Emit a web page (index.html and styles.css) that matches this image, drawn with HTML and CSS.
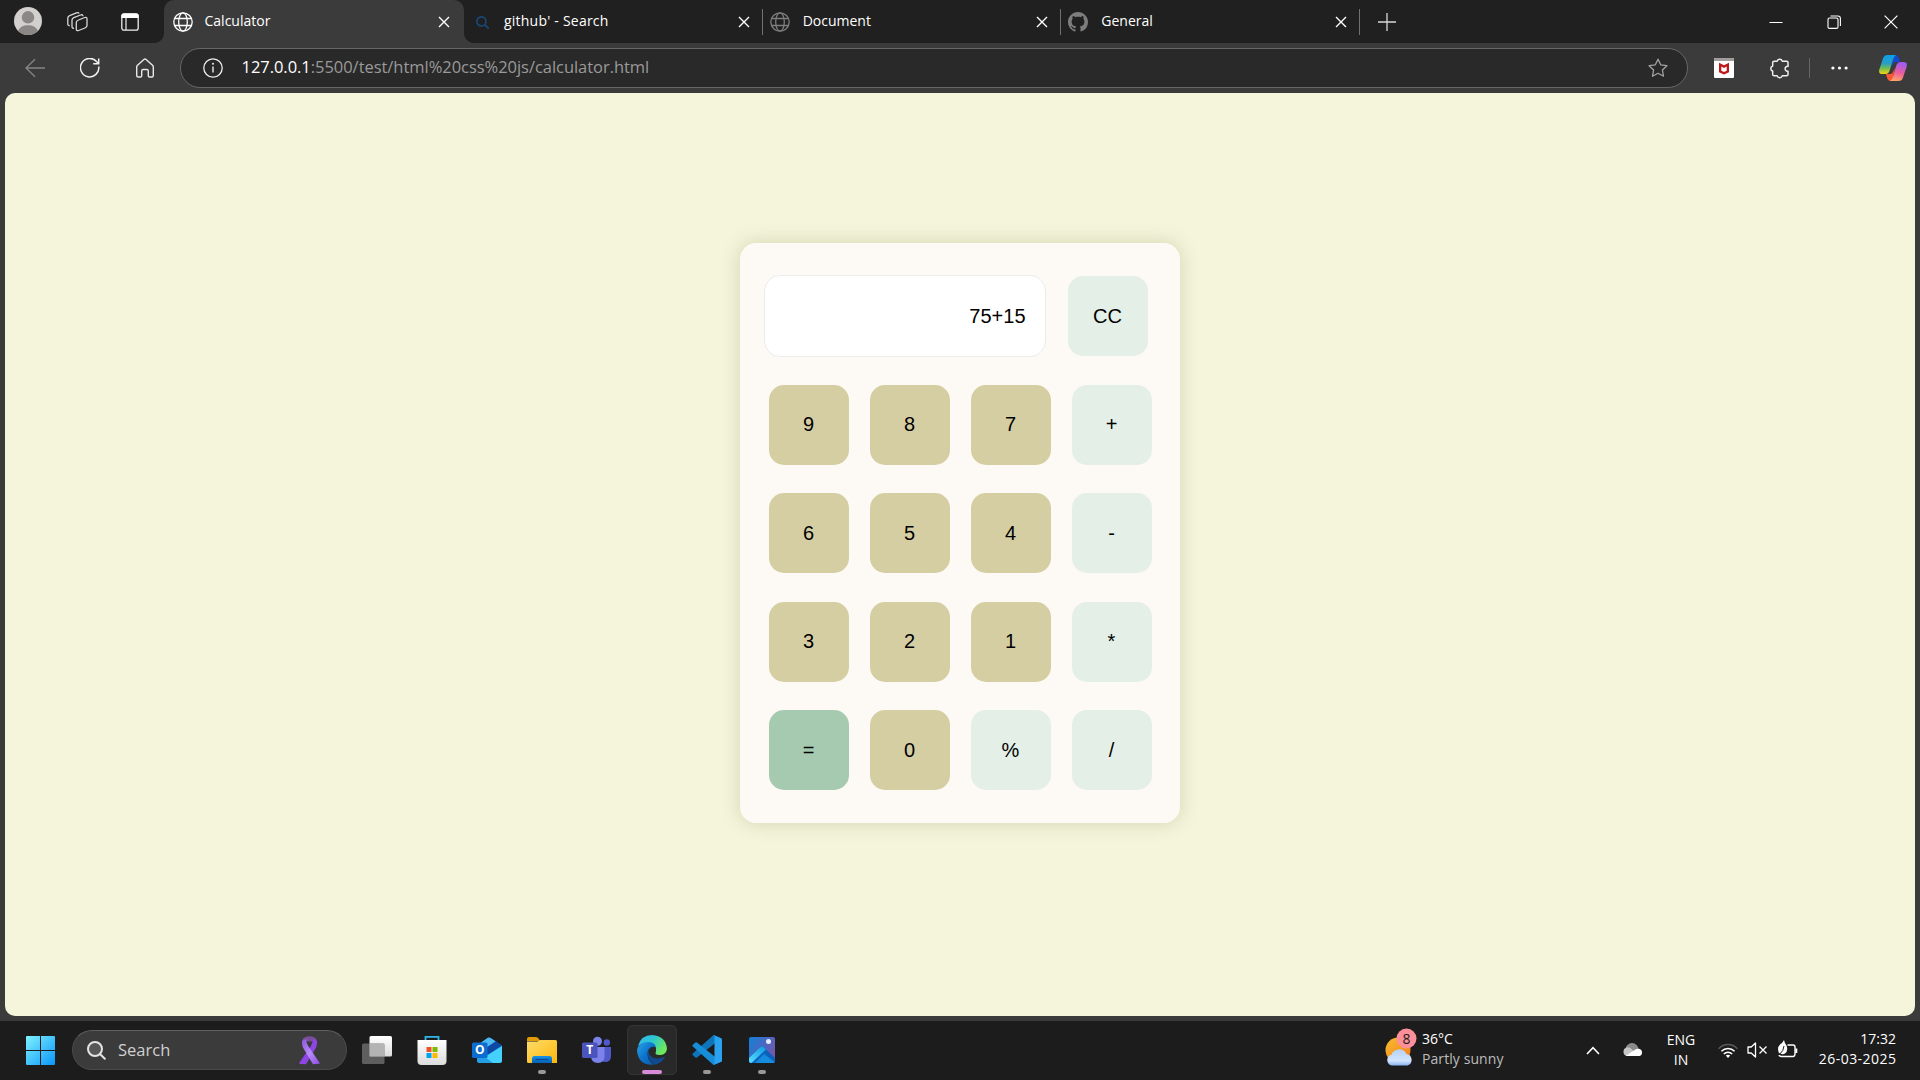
FILE: index.html
```html
<!DOCTYPE html>
<html lang="en">
<head>
<meta charset="utf-8">
<title>Calculator</title>
<link rel="stylesheet" href="styles.css">
</head>
<body>
<svg class="defs" width="0" height="0" aria-hidden="true">
  <defs>
    <symbol id="globe" viewBox="0 0 20 20"><g fill="none" stroke="currentColor" stroke-width="1.3"><circle cx="10" cy="10" r="9.2"/><ellipse cx="10" cy="10" rx="4.3" ry="9.2"/><path d="M1.6 6.5h16.8M1.6 13.5h16.8"/></g></symbol>
    <symbol id="cross" viewBox="0 0 12 12"><path d="M1 1l10 10M11 1L1 11" fill="none" stroke="currentColor" stroke-width="1.4"/></symbol>
    <linearGradient id="gWin" gradientUnits="userSpaceOnUse" x1="0" y1="0" x2="29" y2="29"><stop offset="0" stop-color="#7ff3ff"/><stop offset="1" stop-color="#0a94fb"/></linearGradient>
    <linearGradient id="gStore" x1="0" y1="0" x2="0" y2="1"><stop offset="0" stop-color="#fff"/><stop offset="1" stop-color="#dcdcdc"/></linearGradient>
    <linearGradient id="gFolder" x1="0" y1="0" x2="1" y2="1"><stop offset="0" stop-color="#ffdb6b"/><stop offset="1" stop-color="#fcb90a"/></linearGradient>
    <linearGradient id="gBlue" x1="0" y1="0" x2="0" y2="1"><stop offset="0" stop-color="#1593e8"/><stop offset="1" stop-color="#0560b5"/></linearGradient>
    <linearGradient id="gEdgeTop" x1="0" y1="0" x2="1" y2=".5"><stop offset="0" stop-color="#35b6f0"/><stop offset=".5" stop-color="#2cc6d0"/><stop offset="1" stop-color="#6ee85c"/></linearGradient>
    <linearGradient id="gEdgeLow" x1="0" y1="0" x2="1" y2="1"><stop offset="0" stop-color="#2ba4e4"/><stop offset=".5" stop-color="#0c73cf"/><stop offset="1" stop-color="#0c59a4"/></linearGradient>
    <linearGradient id="gPhoto" x1="0" y1="0" x2="1" y2=".6"><stop offset="0" stop-color="#1180d8"/><stop offset="1" stop-color="#7656ad"/></linearGradient>
    <linearGradient id="gHill" x1="0" y1="1" x2="1" y2="0"><stop offset="0" stop-color="#55e0ff"/><stop offset="1" stop-color="#1697e3"/></linearGradient>
    <linearGradient id="gCopA" x1="0" y1="0" x2="0" y2="1"><stop offset="0" stop-color="#0c9eea"/><stop offset=".45" stop-color="#2a9fc4"/><stop offset=".7" stop-color="#70bd51"/><stop offset="1" stop-color="#f6d413"/></linearGradient>
    <linearGradient id="gCopB" x1=".3" y1="0" x2=".1" y2="1"><stop offset="0" stop-color="#a05bf0"/><stop offset=".5" stop-color="#ee5d9b"/><stop offset="1" stop-color="#ffad63"/></linearGradient>
    <linearGradient id="gSun" x1="0" y1="0" x2="1" y2="1"><stop offset="0" stop-color="#f8bd32"/><stop offset="1" stop-color="#f57b16"/></linearGradient>
    <linearGradient id="gCloud" x1="0" y1="0" x2="0" y2="1"><stop offset="0" stop-color="#b6d3fb"/><stop offset=".7" stop-color="#d2e4fc"/><stop offset="1" stop-color="#86b3f3"/></linearGradient>
    <linearGradient id="gRibbon" x1="0" y1="0" x2="1" y2="1"><stop offset="0" stop-color="#9155dd"/><stop offset=".5" stop-color="#b68cf9"/><stop offset="1" stop-color="#8c4be0"/></linearGradient>
  </defs>
</svg>

<header class="tabstrip">
  <svg class="avatar" viewBox="0 0 28 28"><circle cx="14" cy="14" r="14" fill="#d2d0ce"/><circle cx="14" cy="10.3" r="6.2" fill="#8a8784"/><path d="M4.2 24C5.500 20 9 18.200 14 18.200s8.500 1.800 9.800 5.800A14 14 0 0 1 4.200 24z" fill="#8a8784"/></svg>
  <svg class="workspaces" viewBox="0 0 21 21" fill="none" stroke="#d8d8d8" stroke-width="1.3" stroke-linejoin="round"><path d="M11.500 9q-2.200.8-2.200 2.500v6.500q0 2.200 2.200 1.500l6.500-2.500q2-.8 2-2.500V8q0-2.200-2.200-1.500z"/><path d="M7 17.200q-2 .4-2-1.600V9q0-1.500 1.800-2.300L13.500 4q2.300-.8 2.500 1.200"/><path d="M2.800 14.500q-2 .3-2-1.600V7q0-1.600 1.800-2.300L9.500 1.800q2-.8 2.500.8"/></svg>
  <svg class="vertical-tabs" viewBox="0 0 18 18"><rect x=".8" y=".8" width="16.400" height="16.400" rx="2.200" fill="none" stroke="#eee" stroke-width="1.3"/><path d="M.5 5V2.500q0-2 2-2h13q2 0 2 2V5z" fill="#fff"/><path d="M5 5v12" stroke="#eee" stroke-width="1.200"/></svg>

  <div class="tab tab-active">
    <svg class="favicon"><use href="#globe"/></svg>
    <span class="tab-title">Calculator</span>
    <svg class="tab-close"><use href="#cross"/></svg>
  </div>
  <div class="tab tab-search">
    <svg class="favicon" viewBox="0 0 12 12" fill="none" stroke="#174a78" stroke-width="1.500"><circle cx="5" cy="5" r="4.200"/><path d="M8 8l4 4"/></svg>
    <span class="tab-title">github' - Search</span>
    <svg class="tab-close"><use href="#cross"/></svg>
  </div>
  <div class="tab tab-idle">
    <svg class="favicon"><use href="#globe"/></svg>
    <span class="tab-title">Document</span>
    <svg class="tab-close"><use href="#cross"/></svg>
  </div>
  <div class="tab tab-idle">
    <svg class="favicon" viewBox="0 0 16 16"><path fill="#7d7d7d" d="M8 0C3.580 0 0 3.580 0 8c0 3.540 2.290 6.530 5.470 7.590.4.070.55-.17.55-.38 0-.19-.01-.82-.01-1.490-2.010.37-2.530-.49-2.690-.94-.09-.23-.48-.94-.82-1.130-.28-.15-.68-.52-.01-.53.63-.01 1.080.58 1.230.82.72 1.210 1.870.87 2.330.66.070-.52.28-.87.51-1.070-1.780-.2-3.640-.89-3.640-3.950 0-.87.31-1.590.82-2.150-.08-.2-.36-1.020.08-2.120 0 0 .67-.21 2.200.82.64-.18 1.320-.27 2-.27s1.360.09 2 .27c1.530-1.040 2.200-.82 2.200-.82.44 1.100.16 1.920.08 2.120.51.56.82 1.270.82 2.150 0 3.070-1.870 3.750-3.650 3.950.29.25.54.73.54 1.480 0 1.070-.01 1.930-.01 2.200 0 .21.15.46.55.38A8.010 8.010 0 0 0 16 8c0-4.420-3.580-8-8-8z"/></svg>
    <span class="tab-title">General</span>
    <svg class="tab-close"><use href="#cross"/></svg>
  </div>
  <svg class="new-tab" viewBox="0 0 18 18"><path d="M9 0v18M0 9h18" stroke="#d8d8d8" stroke-width="1.300"/></svg>
  <div class="window-controls">
    <svg viewBox="0 0 14 14"><path d="M.5 7.500h13" stroke="#fff"/></svg>
    <svg viewBox="0 0 14 14" fill="none" stroke="#fff" stroke-width="1.100"><rect x="1" y="3" width="10" height="10.400" rx="1.500"/><path d="M3.500 1H11q2.400 0 2.400 2.400V11"/></svg>
    <svg viewBox="0 0 14 14"><path d="M.6.600l12.800 12.800M13.400.600L.6 13.400" stroke="#fff" stroke-width="1.200"/></svg>
  </div>
</header>

<nav class="toolbar">
  <svg class="nav-icon back" viewBox="0 0 20 20" fill="none" stroke="#858585" stroke-width="1.300"><path d="M20 10H1M10 1.200L1 10l9 8.800"/></svg>
  <svg class="nav-icon" viewBox="0 0 20 20" fill="none" stroke="#f2f2f2" stroke-width="1.500"><path d="M18.800 8.500A9.200 9.200 0 1 1 16.500 3.500L18.500 5.600M18.700.400v5.300h-5.500"/></svg>
  <svg class="nav-icon" viewBox="0 0 20 20" fill="none" stroke="#e8e8e8" stroke-width="1.400" stroke-linejoin="round"><path d="M1.700 9q0-1 .8-1.800L8.900 1.500q1.100-1 2.200 0l6.400 5.700q.8.800.8 1.800v8.500q0 1.500-1.500 1.500h-2.300q-1.200 0-1.200-1.200V13q0-1.500-1.500-1.500H8.200q-1.500 0-1.500 1.500v4.800Q6.700 19 5.500 19H3.200q-1.500 0-1.500-1.500z"/></svg>
  <div class="address">
    <svg class="info" viewBox="0 0 20 20"><circle cx="10" cy="10" r="9.200" fill="none" stroke="#eee" stroke-width="1.300"/><path d="M10 8.500v6" stroke="#eee" stroke-width="1.400"/><circle cx="10" cy="5.800" r="1" fill="#eee"/></svg>
    <span class="url"><b>127.0.0.1</b>:5500/test/html%20css%20js/calculator.html</span>
    <svg class="star" viewBox="0 0 20 20"><path d="M10 1.200l2.700 5.600 6.200.9-4.500 4.300 1.100 6.200-5.500-2.900-5.500 2.900L5.600 12 1.100 7.700l6.200-.9z" fill="none" stroke="#a2a2a2" stroke-width="1.300" stroke-linejoin="round"/></svg>
  </div>
  <svg class="mcafee" viewBox="0 0 20 20"><rect width="20" height="20" rx="1" fill="#fff"/><path d="M0 3V1q0-1 1-1h18q1 0 1 1v2z" fill="#a29d9b"/><path d="M5 4.800l5 2.500 5-2.500v9.400l-5 2.300-5-2.300zM7.300 8.500v4.200l2.700 1.200 2.700-1.200V8.500L10 9.900z" fill="#c01818" fill-rule="evenodd"/></svg>
  <svg class="puzzle" viewBox="0 0 20 20" fill="none" stroke="#f0f0f0" stroke-width="1.400" stroke-linejoin="round"><path d="M5 3h2.800a2.500 2.500 0 0 1 4.800 0h4.200q1.300 0 1.300 1.300V8a2.300 2.300 0 1 0 0 4.500v3.200q0 1.300-1.300 1.300h-4.200a2.500 2.500 0 0 1-4.800 0H5q-1.500 0-1.500-1.300v-3.300a2.500 2.500 0 0 1 0-4.800V4.300Q3.500 3 5 3z"/></svg>
  <span class="divider"></span>
  <svg class="dots" viewBox="0 0 17 4" fill="#fff"><circle cx="1.900" cy="2" r="1.600"/><circle cx="8.500" cy="2" r="1.600"/><circle cx="15.100" cy="2" r="1.600"/></svg>
  <svg class="copilot" viewBox="0 0 28 26"><path d="M15 0h1.500Q19 0 20 3.500L21 7h-4q-2.600 0-3.400 3L12 13z" fill="#1649ce"/><path d="M13 26h-1.500Q9 26 8 22.500L7 19h4q2.600 0 3.400-3L16 13z" fill="#fa5835"/><path d="M8.500 0H17q-2 1-3 4.500l-3 10Q9.800 19 6.500 19H3.500Q-.8 19 .3 14.500L4 3.500Q5 0 8.500 0z" fill="url(#gCopA)"/><path d="M19.500 26H11q2-1 3-4.500l3-10Q18.200 7 21.500 7h3q4.300 0 3.200 4.500L24 22.500Q23 26 19.500 26z" fill="url(#gCopB)"/></svg>
</nav>

<main class="viewport">
  <section class="calculator">
    <div class="display-row">
      <div class="display">75+15</div>
      <div class="key op">CC</div>
    </div>
    <div class="keys">
      <div class="key">9</div><div class="key">8</div><div class="key">7</div><div class="key op">+</div>
      <div class="key">6</div><div class="key">5</div><div class="key">4</div><div class="key op">-</div>
      <div class="key">3</div><div class="key">2</div><div class="key">1</div><div class="key op">*</div>
      <div class="key equals">=</div><div class="key">0</div><div class="key op">%</div><div class="key op">/</div>
    </div>
  </section>
</main>

<footer class="taskbar">
  <svg class="start" viewBox="0 0 29 29"><path d="M1 0h13v14H0V1q0-1 1-1zM15 0h13q1 0 1 1v13H15zM0 15h14v14H1q-1 0-1-1zM15 15h14v13q0 1-1 1H15z" fill="url(#gWin)"/></svg>
  <div class="search">
    <svg class="search-glass" viewBox="0 0 19 19" fill="none" stroke="#e4e4e4" stroke-width="2"><circle cx="8" cy="8" r="7" fill="#575757"/><path d="M13 13l4.800 4.800" stroke-linecap="round"/></svg>
    <span class="search-label">Search</span>
    <svg class="ribbon" viewBox="0 0 21 29"><path d="M3.500 4Q5 .3 10.500.3T17.500 4q-2.500 1.500-7 1.500T3.500 4z" fill="#7b4e9c"/><path d="M17.500 4Q19.500 8.500 15 15L7 28.300 1 28Q-.2 27.800.7 26.300L10.500 12q4-5.500 2.800-8.500z" fill="#8f45e6"/><path d="M3.500 4Q1.500 8.500 6 15l8 13.300 6-.5q1.200-.3.3-1.500L10.500 12q-4-5.500-2.800-8.500z" fill="url(#gRibbon)"/></svg>
  </div>
  <div class="apps">
    <div class="app"><svg viewBox="0 0 30 30"><rect x="7.500" y="1" width="22.500" height="20.500" rx="1.500" fill="url(#gStore)"/><rect x="0" y="8.500" width="22.500" height="20.500" rx="1.500" fill="#6f6f6f" fill-opacity=".8"/><path d="M7.500 8.500h15v13h-15z" fill="#b4b4b4"/></svg></div>
    <div class="app"><svg viewBox="0 0 30 30"><path d="M8.500 6.500V1.900h13v4.600" fill="none" stroke="#31b6ec" stroke-width="1.800"/><path d="M.5 5h29v21q0 4-4 4h-21q-4 0-4-4z" fill="url(#gStore)"/><path d="M9.500 12h5v5h-5z" fill="#f25022"/><path d="M15.500 12h5v5h-5z" fill="#7fba00"/><path d="M9.500 18h5v5h-5z" fill="#00a4ef"/><path d="M15.500 18h5v5h-5z" fill="#ffb900"/></svg></div>
    <div class="app"><svg viewBox="0 0 30 30"><path d="M5 10.500L15.500 3q1.500-1 3 0L30 10.500V20L18 24 5 20z" fill="#1478d4"/><path d="M5 10.500L15.500 3q1.500-1 3 0l5 3.200L9 16z" fill="#4cb9f3"/><path d="M24 6.500l6 4-14 9-4-5z" fill="#0d48a3"/><path d="M30 11v15q0 2-2 2H8q-3 0-3-3v-3l10-1.500z" fill="#44d1fb"/><path d="M5 22l8 0 8 6H8q-3 0-3-3z" fill="#249fe6"/><rect y="7.500" width="15.500" height="15.500" rx="1.500" fill="#0c6cd0"/><text x="7.800" y="19.300" class="logo-letter">O</text></svg></div>
    <div class="app running"><svg viewBox="0 0 30 30"><path d="M0 4q0-2 2-2h7q1.500 0 3 2l1 2H0z" fill="#e09b05"/><path d="M0 6.500h10.500L13 5h15.500q1.500 0 1.500 1.500V28H1.500Q0 28 0 26.500z" fill="url(#gFolder)"/><path d="M5 28v-4.500Q5 21 7.500 21h15q2.500 0 2.500 2.500V28z" fill="url(#gBlue)"/><path d="M8.500 24.500h13" stroke="#084c8f" stroke-width="1.200"/></svg></div>
    <div class="app"><svg viewBox="0 0 30 30"><circle cx="24.800" cy="7.500" r="3.200" fill="#5059c9"/><path d="M19 12h10v9q0 6-6 6-4 0-4-4z" fill="#5059c9"/><circle cx="15.500" cy="6.300" r="4.500" fill="#7b83eb"/><path d="M9 12h13.500v9.500q0 6.500-6.500 6.500-7 0-7-7z" fill="#7b83eb"/><rect y="7.500" width="15.500" height="15.500" rx="1.500" fill="#4b53bc"/><text x="7.800" y="19.300" class="logo-letter">T</text></svg></div>
    <div class="app running active"><svg viewBox="0 0 30 30"><path d="M1 11Q4 0 15 0q14 1 15 14-1 6-7.500 6-5.500 0-3.500-3.500Q20 8 11 8 5 8 1 11z" fill="url(#gEdgeTop)"/><path d="M0 15Q2 7 11 7q6.500 0 8 5-6-1.500-8 4-2 9 6 13.500Q1 31 0 15z" fill="url(#gEdgeLow)"/><path d="M11.500 13Q8 24 18 29.700q6-1 9.800-7.200.5-1.200-1-.5Q17 26 12.500 19.500q-2-3-1-6.500z" fill="#124a8f"/></svg></div>
    <div class="app running"><svg viewBox="0 0 30 30"><path d="M21.500 0L30 3.500 22 9 5 22.500q-.8.600-1.600 0L.8 20.200q-.8-.8 0-1.700z" fill="#0f75ba"/><path d="M21.500 30L30 26.500 22 21 5 7.500q-.8-.6-1.600 0L.8 9.800q-.8.800 0 1.700z" fill="#168dd6"/><path d="M21.500 0L29 3.200q1 .5 1 1.600v20.400q0 1.100-1 1.600L21.500 30q1-.5 1-2V2q0-1.500-1-2z" fill="#2ba2f0"/></svg></div>
    <div class="app running"><svg viewBox="0 0 30 30"><rect x="2" y="2" width="26" height="26" rx="2" fill="url(#gPhoto)"/><path d="M2 23l11-10.500q2-1.800 4 0L28 23v3q0 2-2 2H4q-2 0-2-2z" fill="#0963bd"/><path d="M2 23l11-10.500q2-1.800 4 0l2 2L4.500 28Q2 28 2 26z" fill="url(#gHill)"/><path d="M17 19l10.500 8Q27 28 26 28H8z" fill="#168cdd"/><circle cx="21.500" cy="6.600" r="2.500" fill="#e6edff"/></svg></div>
  </div>

  <div class="weather">
    <svg class="weather-icon" viewBox="0 0 32 39"><circle cx="13" cy="22" r="12.500" fill="url(#gSun)"/><path d="M7 37.500a5.500 5.500 0 0 1-.5-10.800 8 8 0 0 1 14.800-.7 5.900 5.900 0 0 1 1.200 11.500z" fill="url(#gCloud)"/><circle cx="21.500" cy="10.500" r="10" fill="#fd8f9a"/><text x="21.500" y="15.600" class="badge-count">8</text></svg>
    <div class="weather-text"><span>36°C</span><span class="muted">Partly sunny</span></div>
  </div>
  <svg class="chevron" viewBox="0 0 14 9"><path d="M1 8l6-6.300L13 8" fill="none" stroke="#fff" stroke-width="1.600"/></svg>
  <svg class="onedrive" viewBox="0 0 21 14"><path d="M4 9a6.500 6.500 0 0 1 12-5l2 6z" fill="#8b8b8b"/><path d="M4.500 13a4.500 4.500 0 0 1 0-8.500Q8 3.500 10.500 7l4 5z" fill="#c5c5c5"/><path d="M3.500 13L13 6.800q1.500-1.200 3.500-1A3.700 3.700 0 0 1 17.500 13z" fill="#fff"/></svg>
  <div class="language"><span>ENG</span><span>IN</span></div>
  <svg class="wifi" viewBox="0 0 20 17" fill="none" stroke="#fff" stroke-width="1.500"><path d="M.7 6.700a12.500 12.500 0 0 1 18.600 0" stroke="#5a5a5a"/><path d="M3.400 9.300a9.200 9.200 0 0 1 13.200 0M5.800 12a6 6 0 0 1 8.400 0"/><path d="M7.800 13.500q2.200-1.500 4.400 0L10 16z" fill="#fff" stroke="none"/></svg>
  <svg class="speaker" viewBox="0 0 20 16" fill="none" stroke="#fff" stroke-width="1.300" stroke-linejoin="round"><path d="M1 5v6h3.200l4.300 4V1L4.200 5z"/><path d="M12.500 4.500l7 7M19.500 4.500l-7 7"/></svg>
  <svg class="battery" viewBox="0 0 20 18" fill="none" stroke="#fff" stroke-width="1.400"><path d="M10 5h5.500q2 0 2 2v6.500q0 3-2 3H4Q2 16.500 1.500 15"/><path d="M18.800 8.500v4.500" stroke-width="2"/><path d="M6.500 0Q7 3 9 5.500q2 5.500-1.500 8-3 1.500-6-.5Q-1 7.500 3 4q2-1 3.500-4z" fill="#fff" stroke="none"/><path d="M6.500 6Q6.500 10.500 1.500 15" stroke="#1c1c1c" stroke-width="1"/></svg>
  <div class="clock"><span>17:32</span><span class="date">26-03-2025</span></div>
</footer>
</body>
</html>
```

FILE: styles.css
```css
* { box-sizing: border-box; }

body {
  margin: 0;
  width: 1920px;
  height: 1080px;
  overflow: hidden;
  display: flex;
  flex-direction: column;
  background: #3b3b3b;
  color: #fff;
  font: 14px/20px "Open Sans", "Noto Sans", sans-serif;
}

svg { display: block; flex: none; }
.defs { position: absolute; }

/* Tab strip */
.tabstrip {
  display: flex;
  align-items: center;
  height: 43px;
  flex: none;
  padding-left: 14px;
  background: #202020;
}
.avatar { width: 28px; height: 28px; margin-bottom: 1px; }
.workspaces { width: 21px; height: 21px; margin-left: 25px; }
.vertical-tabs { width: 18px; height: 18px; margin: 0 25px 0 33px; }

.tab {
  position: relative;
  display: flex;
  align-items: center;
  width: 298.67px;
  height: 43px;
  flex: none;
  padding: 1px 13px 0 7px;
}
.favicon { width: 20px; height: 20px; color: #7d7d7d; }
.tab-title { flex: 1; padding: 0 0 3px 13px; white-space: nowrap; }
.tab-close { width: 12px; height: 12px; }
.tab-active {
  width: 300px;
  padding: 1px 14px 0 9px;
  background: #3b3b3b;
  border-radius: 10px 10px 0 0;
}
.tab-active .favicon { color: #fff; }
.tab-active .tab-title { padding-left: 11.500px; }
.tab-active::before,
.tab-active::after {
  content: "";
  position: absolute;
  bottom: 0;
  width: 10px;
  height: 10px;
}
.tab-active::before { left: -10px; background: radial-gradient(circle at 0 0, #202020 9.500px, #3b3b3b 10.500px); }
.tab-active::after { right: -10px; background: radial-gradient(circle at 100% 0, #202020 9.500px, #3b3b3b 10.500px); }
.tab-search { padding-left: 12px; }
.tab-search .favicon { width: 13px; height: 13px; }
.tab-search .tab-title { padding-left: 15px; letter-spacing: .22px; }
.tab-search::after,
.tab-idle::after {
  content: "";
  position: absolute;
  right: 0;
  top: 9px;
  width: 1px;
  height: 26px;
  background: #707070;
}
.new-tab { width: 18px; height: 18px; margin-left: 18px; }
.window-controls {
  display: flex;
  gap: 43.500px;
  margin-left: auto;
  padding-right: 22px;
}
.window-controls svg { width: 14px; height: 14px; }

/* Navigation bar */
.toolbar {
  display: flex;
  align-items: center;
  height: 50px;
  flex: none;
  padding-left: 25px;
}
.nav-icon { width: 20px; height: 20px; margin-right: 35px; }
.address {
  display: flex;
  align-items: center;
  width: 1508px;
  height: 40px;
  flex: none;
  margin-left: -10px;
  padding: 0 19px 0 22px;
  border: 1px solid #676767;
  border-radius: 20px;
  background: #292929;
}
.info { width: 20px; height: 20px; }
.url {
  flex: 1;
  padding: 0 0 2px 18.500px;
  color: #9a9a9a;
  font-size: 16.500px;
  letter-spacing: -.04px;
  white-space: nowrap;
}
.url b { color: #fff; font-weight: 400; }
.star { width: 20px; height: 20px; }
.mcafee { width: 20px; height: 20px; margin-left: 26px; }
.puzzle { width: 21px; height: 21px; margin-left: 35px; }
.divider { width: 1px; height: 20px; margin-left: 19px; background: #666; }
.dots { width: 17px; height: 4px; margin-left: 21px; }
.copilot { width: 28px; height: 26px; margin-left: 31px; }

/* Page */
.viewport {
  display: flex;
  justify-content: center;
  align-items: flex-start;
  height: 922.500px;
  flex: none;
  margin: 0 5px;
  padding-top: 150px;
  border-radius: 10px;
  background: #f5f5dc;
}
.calculator {
  width: 440px;
  height: 580px;
  padding: 32px 24px;
  border-radius: 16px;
  background: #fdfaf5;
  box-shadow: 0 0 20px rgba(90, 80, 0, .2);
  color: #000;
  font: 20px/23px "Liberation Sans", Arial, sans-serif;
}
.display-row { display: flex; align-items: center; gap: 22px; }
.display {
  display: flex;
  align-items: center;
  justify-content: flex-end;
  width: 282px;
  height: 82px;
  padding-right: 19.500px;
  border: 1px solid #ececec;
  border-radius: 16px;
  background: #fff;
}
.keys {
  display: grid;
  grid-template-columns: repeat(4, 80px);
  gap: 28.400px 21px;
  padding: 27.900px 0 0 5px;
}
.key {
  display: flex;
  align-items: center;
  justify-content: center;
  width: 80px;
  height: 80px;
  padding-right: 1px;
  border-radius: 15px;
  background: #d6cea3;
}
.op { background: #e4efe7; }
.equals { background: #a6cab0; }

/* Taskbar */
.taskbar {
  display: flex;
  align-items: center;
  height: 59px;
  flex: none;
  margin-top: auto;
  padding: 0 0 1px 26px;
  background: #1c1c1c;
}
.start { width: 29px; height: 29px; }
.search {
  display: flex;
  align-items: center;
  width: 275px;
  height: 40px;
  flex: none;
  margin: 0 15px 0 17px;
  padding: 0 26px 0 14px;
  border: 1px solid #4a4a4a;
  border-top-color: #606060;
  border-radius: 20px;
  background: #3b3b3b;
}
.search-glass { width: 19px; height: 19px; }
.search-label { flex: 1; padding-left: 12px; color: #d0d0d0; font-size: 16.500px; }
.ribbon { width: 21px; height: 29px; }
.apps { display: flex; gap: 5px; margin-left: -10px; }
.app {
  position: relative;
  display: flex;
  align-items: center;
  justify-content: center;
  width: 50px;
  height: 50px;
}
.app svg { width: 30px; height: 30px; }
.running::after {
  content: "";
  position: absolute;
  left: 21px;
  bottom: 1px;
  width: 8px;
  height: 4px;
  border-radius: 2px;
  background: #989898;
}
.active {
  border: 1px solid #343434;
  border-radius: 5px;
  background: #292929;
}
.active::after { left: 14px; bottom: 0; width: 20px; background: #d88bda; }
.logo-letter { fill: #fff; font: 700 12px "Open Sans", sans-serif; text-anchor: middle; }

.weather { display: flex; align-items: center; width: 180px; margin-left: 598px; }
.weather-icon { width: 32px; height: 39px; margin-bottom: 5px; }
.badge-count { fill: #1c1c1c; font: 14px "Open Sans", sans-serif; text-anchor: middle; }
.weather-text { display: flex; flex-direction: column; padding: 0 0 2px 5px; white-space: nowrap; }
.muted { color: #bdbdbd; letter-spacing: .08px; }
.chevron { width: 14px; height: 9px; margin-left: 21px; }
.onedrive { width: 21px; height: 14px; margin-left: 22px; }
.language {
  display: flex;
  flex-direction: column;
  align-items: center;
  width: 40px;
  margin-left: 18px;
}
.wifi { width: 20px; height: 17px; margin-left: 17px; }
.speaker { width: 20px; height: 16px; margin-left: 9px; }
.battery { width: 21px; height: 18px; margin: 0 0 3px 10px; }
.clock {
  display: flex;
  flex-direction: column;
  align-items: flex-end;
  margin-left: auto;
  padding: 0 24px 2px 0;
}
.date { margin-right: -.4px; letter-spacing: .45px; }
```
